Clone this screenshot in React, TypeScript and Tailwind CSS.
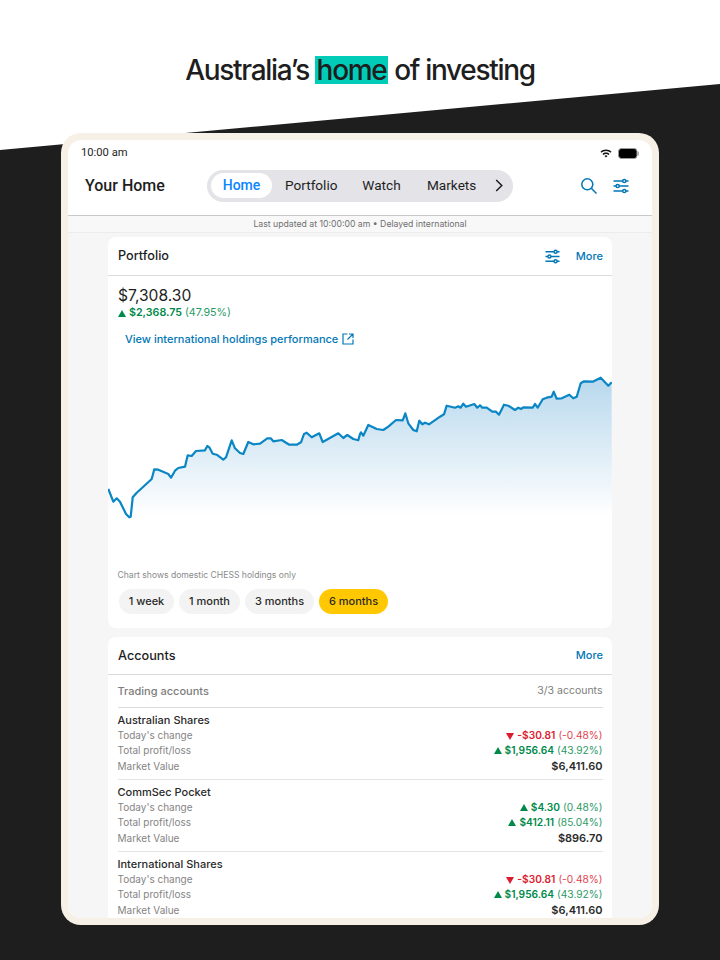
const points = '108.3,489 113.3,501.7 116.7,498.3 120,501.7 126,514 129.3,517.3 130.7,516.7 132.7,497.3 136.7,492.7 143.3,486.7 151.7,479 154.3,469.3 158.3,469.7 168.3,474 171,477.7 175,470.7 178.3,468 185,466.7 187.7,455.3 191.7,456 196,451 205,450.3 207.3,446 209.3,447.3 212.7,453.7 216.7,454.7 223.3,459.7 226,457.3 231.7,440.3 235,448.3 240,453 243.3,454 248.3,442 253.3,444.3 260,443.7 267.3,438.3 270.7,438.3 273.3,441.3 281.7,440 289.3,444.7 296.7,444.7 301,442.3 304,434 306.7,432.7 311.7,437.3 319.3,433.3 322.7,442 338.3,433.3 343.3,438 347.3,435 353.3,439 358.3,440.3 360,434 361,432.3 363.3,435.7 368.3,425 376.7,429 383.3,430 388.3,426.7 396,420 402.7,420.3 405.3,413.3 408.3,423.3 413.3,430 416.7,431.3 419.3,420.7 422.3,424.3 425,422.7 429,424.3 440,416.7 444,414.3 446.7,405.7 455,407.7 458.3,406.3 460.7,407.7 463.3,403.7 466,406.7 474.3,404 477.3,407.7 480,405.3 482.3,407.7 486.7,407.7 492.3,411.7 496,411.7 499,414.7 504,404.7 508.3,405.7 515,410 518.3,407.7 521,409 523.3,407.3 532.7,407.7 535,404 537.7,407.7 542.7,399.3 546.7,397.7 551.7,396.7 553.7,391.7 556.7,398.7 561.7,398.3 569.3,394.7 573.3,398.3 576.7,396.7 580.7,383.3 584,381.3 592.7,381.7 600.7,377.7 608.3,385.7 611.7,382.3';

const accounts = [
  { name: 'Australian Shares', today: ['-$30.81', '(-0.48%)'], down: true, total: ['$1,956.64', '(43.92%)'], value: '$6,411.60' },
  { name: 'CommSec Pocket', today: ['$4.30', '(0.48%)'], down: false, total: ['$412.11', '(85.04%)'], value: '$896.70' },
  { name: 'International Shares', today: ['-$30.81', '(-0.48%)'], down: true, total: ['$1,956.64', '(43.92%)'], value: '$6,411.60' },
];

function Sliders({ className }: { className: string }) {
  return (
    <svg viewBox="0 0 16 16" fill="none" stroke="#0077b6" strokeWidth="1.5" className={className}>
      <path d="M0.5 3h9.300M12.800 3h2.700M0.500 8h2.700M6.200 8h9.300M0.500 13h9.300M12.800 13h2.700" />
      <circle cx="11.300" cy="3" r="1.600" />
      <circle cx="4.700" cy="8" r="1.600" />
      <circle cx="11.300" cy="13" r="1.600" />
    </svg>
  );
}

function Change({ parts, down }: { parts: string[]; down: boolean }) {
  const text = down ? 'text-[#dc1c2e]' : 'text-[#00894a]';
  return (
    <div className={`flex items-center justify-end h-[15px] text-[10.200px] ${text}`}>
      <svg viewBox="0 0 8 8" className="w-[8px] h-[8px] mr-[3px]" fill="currentColor">
        <path d={down ? 'M0 1h8L4 8z' : 'M0 7h8L4 0z'} />
      </svg>
      <span className="font-semibold">{parts[0]}</span>
      <span className="ml-[3px] opacity-85">{parts[1]}</span>
    </div>
  );
}

export default function App() {
  return (
    <div className="relative w-[720px] h-[960px] overflow-hidden bg-white font-['Inter',sans-serif]">
      <div className="absolute inset-0 bg-[#1e1e1e] [clip-path:polygon(0_150px,720px_84px,720px_960px,0_960px)]" />

      <div className="relative flex flex-col items-center">
        <h1 className="h-[133px] pt-[56px] text-[28px] leading-[28px] font-medium tracking-[-1.3px] text-[#1e1e1e] font-['Inter',sans-serif]">
          Australia’s <span className="inline-block h-[28px] bg-[#00ccb8] px-[1.500px]">home</span> of investing
        </h1>

        <div className="w-[598px] h-[792px] bg-[#f6f0e7] rounded-[20px] p-[7px]">
          <div className="flex flex-col h-full bg-white rounded-[13px] overflow-hidden">
            {/* status bar */}
            <div className="flex items-center justify-between h-[24px] shrink-0 pl-[13px] pr-[13px] pt-[2px] text-[11.200px] text-[#1e1e1e] font-['Roboto',sans-serif]">
              <span>10:00 am</span>
              <div className="flex items-center gap-[6px]">
                <svg viewBox="0 0 12 9" className="w-[12px] h-[9px]" fill="#111">
                  <path d="M6 0.5C3.800 0.500 1.900 1.300 0.500 2.700l1 1.100C2.700 2.700 4.300 2 6 2s3.300 0.700 4.500 1.800l1-1.100C10.100 1.300 8.200 0.500 6 0.500z" />
                  <path d="M6 3.500c-1.400 0-2.600 0.500-3.500 1.400l1 1.100C4.100 5.400 5 5 6 5s1.900 0.400 2.500 1l1-1.100C8.600 4 7.400 3.500 6 3.500z" />
                  <path d="M6 6.300c-0.600 0-1.100 0.200-1.500 0.600L6 8.600l1.500-1.700C7.100 6.500 6.600 6.300 6 6.300z" />
                </svg>
                <svg viewBox="0 0 21 11" className="w-[21px] h-[11px]">
                  <rect x="0.500" y="0.500" width="18.500" height="10" rx="3" fill="#000" stroke="#9a9a9a" />
                  <rect x="19.500" y="3.500" width="1.300" height="4" rx="0.600" fill="#9a9a9a" />
                </svg>
              </div>
            </div>

            {/* top nav */}
            <div className="flex items-center h-[52px] shrink-0 border-b border-[#c9c9cb] pb-[8px] font-['Roboto',sans-serif]">
              <div className="w-[139px] pl-[17px] text-[16px] font-medium text-[#1e1e1e]">Your Home</div>
              <div className="flex items-center w-[306px] h-[32px] rounded-full bg-[#e3e3e8] pl-[4px] text-[13.600px] text-[#1e1e1e]">
                <span className="flex items-center justify-center w-[61px] h-[25px] rounded-full bg-white text-[#0a84ff] font-medium text-[14px]">Home</span>
                <span className="ml-[13px] w-[52px] text-center">Portfolio</span>
                <span className="ml-[25px] w-[39px] text-center">Watch</span>
                <span className="ml-[26px] w-[49px] text-center">Markets</span>
                <svg viewBox="0 0 8 14" fill="none" stroke="#1e1e1e" strokeWidth="1.600" className="w-[8px] h-[13px] ml-[19px]">
                  <path d="M1 1l6 6-6 6" />
                </svg>
              </div>
              <svg viewBox="0 0 16 16" fill="none" stroke="#0077b6" strokeWidth="1.500" className="w-[16px] h-[16px] ml-[68px]">
                <circle cx="6.300" cy="6.300" r="5.500" />
                <path d="M10.300 10.300l5.200 5.200" />
              </svg>
              <Sliders className="w-[16px] h-[16px] ml-[16px]" />
            </div>

            {/* last updated */}
            <div className="flex items-center justify-center h-[17px] shrink-0 pt-[1px] bg-[#f8f8f8] border-b border-[#ececec] text-[8.700px] text-[#6f6f6f]">
              Last updated at 10:00:00 am • Delayed international
            </div>

            {/* content */}
            <div className="flex-1 min-h-0 overflow-hidden bg-[#f6f6f6] px-[40px] pt-[4px]">
              <div className="h-[391px] bg-white rounded-[8px]">
                <div className="flex items-center justify-between h-[39px] border-b border-[#dcdcdc] pl-[10px] pr-[9px]">
                  <span className="text-[12.700px] font-medium text-[#1e1e1e]">Portfolio</span>
                  <div className="flex items-center">
                    <Sliders className="w-[15px] h-[15px]" />
                    <span className="ml-[16px] text-[11px] font-medium text-[#0077b6] relative top-[0.5px]">More</span>
                  </div>
                </div>

                <div className="pl-[10px] pt-[10px]">
                  <div className="text-[15.600px] leading-[20px] text-[#1e1e1e]">$7,308.30</div>
                  <div className="flex items-center h-[15px] text-[10.700px] text-[#00894a]">
                    <svg viewBox="0 0 8 8" className="w-[8px] h-[8px] mr-[3px]" fill="currentColor">
                      <path d="M0 7h8L4 0z" />
                    </svg>
                    <span className="font-semibold">$2,368.75</span>
                    <span className="ml-[3px] opacity-85">(47.95%)</span>
                  </div>
                  <div className="flex items-center h-[16px] mt-[10px] ml-[7px] text-[11px] font-medium text-[#0077b6]">
                    View international holdings performance
                    <svg viewBox="0 0 12 12" fill="none" stroke="#0077b6" strokeWidth="1.200" className="w-[12px] h-[12px] ml-[4px]">
                      <path d="M5.500 1H1v10h10V6.500M7 1h4v4M11 1L5.500 6.500" />
                    </svg>
                  </div>
                </div>

                <svg viewBox="108 360 504 200" className="block w-[504px] h-[200px] mt-[13px]">
                  <defs>
                    <linearGradient id="area" gradientUnits="userSpaceOnUse" x1="0" y1="378" x2="0" y2="516">
                      <stop offset="0" stopColor="#b8d8ed" />
                      <stop offset="1" stopColor="#ffffff" />
                    </linearGradient>
                  </defs>
                  <polygon points={`${points} 612,540 108,540`} fill="url(#area)" />
                  <polyline points={points} fill="none" stroke="#0a86c4" strokeWidth="2.200" strokeLinejoin="round" />
                </svg>

                <div className="pl-[9.500px] mt-[8.500px] text-[8.600px] leading-[12px] text-[#8a8a8a]">Chart shows domestic CHESS holdings only</div>
                <div className="flex items-center gap-[5px] ml-[11px] mt-[8px] text-[11px] font-medium text-[#2a2a2a]">
                  <span className="flex items-center justify-center w-[55px] h-[25px] rounded-full bg-[#f3f3f3]">1 week</span>
                  <span className="flex items-center justify-center w-[61px] h-[25px] rounded-full bg-[#f3f3f3]">1 month</span>
                  <span className="flex items-center justify-center w-[69px] h-[25px] rounded-full bg-[#f3f3f3]">3 months</span>
                  <span className="flex items-center justify-center w-[69px] h-[25px] rounded-full bg-[#ffc800]">6 months</span>
                </div>
              </div>

              <div className="mt-[9px] bg-white rounded-t-[8px]">
                <div className="flex items-center justify-between h-[38px] border-b border-[#dcdcdc] pl-[10px] pr-[9px]">
                  <span className="text-[12.700px] font-medium text-[#1e1e1e]">Accounts</span>
                  <span className="text-[11px] font-medium text-[#0077b6]">More</span>
                </div>
                <div className="pl-[9.500px] pr-[9.500px]">
                  <div className="flex items-center justify-between h-[33px] border-b border-[#dcdcdc] text-[#7d7d7d]">
                    <span className="font-medium text-[11px]">Trading accounts</span>
                    <span className="text-[10.500px]">3/3 accounts</span>
                  </div>
                  {accounts.map((a) => (
                    <div key={a.name} className="h-[72px] pt-[5px] border-b border-[#e4e4e4] last:border-b-0">
                      <div className="h-[15px] leading-[15px] text-[11px] font-medium text-[#2a2a2a]">{a.name}</div>
                      <div className="grid grid-cols-2 text-[10px] text-[#848484]">
                        <div>
                          <div className="h-[15px] leading-[15px]">Today's change</div>
                          <div className="h-[15px] leading-[15px]">Total profit/loss</div>
                          <div className="h-[15.500px] leading-[16px]">Market Value</div>
                        </div>
                        <div>
                          <Change parts={a.today} down={a.down} />
                          <Change parts={a.total} down={false} />
                          <div className="h-[15.500px] leading-[16px] text-right text-[11px] font-semibold text-[#2a2a2a]">{a.value}</div>
                        </div>
                      </div>
                    </div>
                  ))}
                </div>
              </div>
            </div>
          </div>
        </div>
      </div>
    </div>
  );
}
